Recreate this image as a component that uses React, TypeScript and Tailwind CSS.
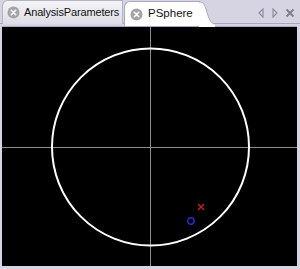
import React from "react";

function CloseDot() {
  return (
    <svg width="13" height="13" viewBox="0 0 13 13" className="shrink-0">
      <circle cx="6.5" cy="6.5" r="6" fill="#a3a3a8" />
      <path d="M4.3 4.3 L8.7 8.7 M8.7 4.3 L4.3 8.7" stroke="#fff" strokeWidth="1.6" strokeLinecap="round" />
    </svg>
  );
}

function PlotCanvas() {
  return (
    <svg width="295" height="239" viewBox="0 0 295 239" className="block">
      <rect width="295" height="239" fill="#000" />
      <line x1="148.5" y1="0" x2="148.5" y2="239" stroke="#8c8c8c" strokeWidth="1" />
      <line x1="0" y1="120.5" x2="295" y2="120.5" stroke="#8c8c8c" strokeWidth="1" />
      <circle cx="148.5" cy="120" r="98.5" fill="none" stroke="#fff" strokeWidth="2" />
      <circle cx="189" cy="194" r="3.2" fill="none" stroke="#2a2ad8" strokeWidth="1.4" />
      <path d="M196 177 L202 183 M202 177 L196 183" stroke="#c42020" strokeWidth="1.5" />
    </svg>
  );
}

export default function App() {
  return (
    <div className="w-[300px] h-[269px] bg-[#d6d4e3] flex flex-col overflow-hidden font-['Liberation_Sans',Arial,sans-serif]">
      <div className="relative h-[27px] flex items-end">
        <div className="absolute left-0 right-0 bottom-[2px] h-px bg-[#a9a6c0]" />
        <div className="relative ml-[2px] h-[24px] w-[121px] mb-[2px] flex items-center gap-[4px] pl-[4px] rounded-tl-[6px] border border-b-0 border-[#b6b4c4] bg-gradient-to-b from-[#f4f4f6] to-[#dedde6]">
          <CloseDot />
          <span className="text-[11px] tracking-[-0.15px] text-[#111] leading-none whitespace-nowrap">AnalysisParameters</span>
        </div>
        <div className="relative h-[25px] w-[76px] ml-[1px] flex items-center gap-[5px] pl-[5px] rounded-tl-[6px] border border-b-0 border-r-0 border-[#a9a6c0] bg-white z-10">
          <CloseDot />
          <span className="text-[11.5px] text-[#111] leading-none whitespace-nowrap">PSphere</span>
          <svg width="16" height="26" viewBox="0 0 16 26" className="absolute -right-[15px] -top-px">
            <path d="M0 1 C5 1 5 3 7 8 C10 18 11 22 16 23 L16 26 L0 26 Z" fill="#fff" />
            <path d="M0 1 C5 1 5 3 7 8 C10 18 11 22 16 23" fill="none" stroke="#a9a6c0" strokeWidth="1" />
          </svg>
        </div>
        <div className="ml-auto mr-[5px] mb-[8px] flex items-center gap-[6px]">
          <svg width="8" height="10" viewBox="0 0 8 10">
            <path d="M6 1 L2 5 L6 9 Z" fill="none" stroke="#8e8ea0" strokeWidth="1.2" />
          </svg>
          <svg width="8" height="10" viewBox="0 0 8 10">
            <path d="M2 1 L6 5 L2 9 Z" fill="none" stroke="#8e8ea0" strokeWidth="1.2" />
          </svg>
          <svg width="10" height="10" viewBox="0 0 10 10">
            <path d="M1.5 1.5 L8.5 8.5 M8.5 1.5 L1.5 8.5" stroke="#7c7c90" strokeWidth="1.8" />
          </svg>
        </div>
      </div>
      <div className="flex-1 ml-[2px] mr-[3px] mb-[3px] border-t border-[#a9a6c0] bg-black">
        <PlotCanvas />
      </div>
    </div>
  );
}
